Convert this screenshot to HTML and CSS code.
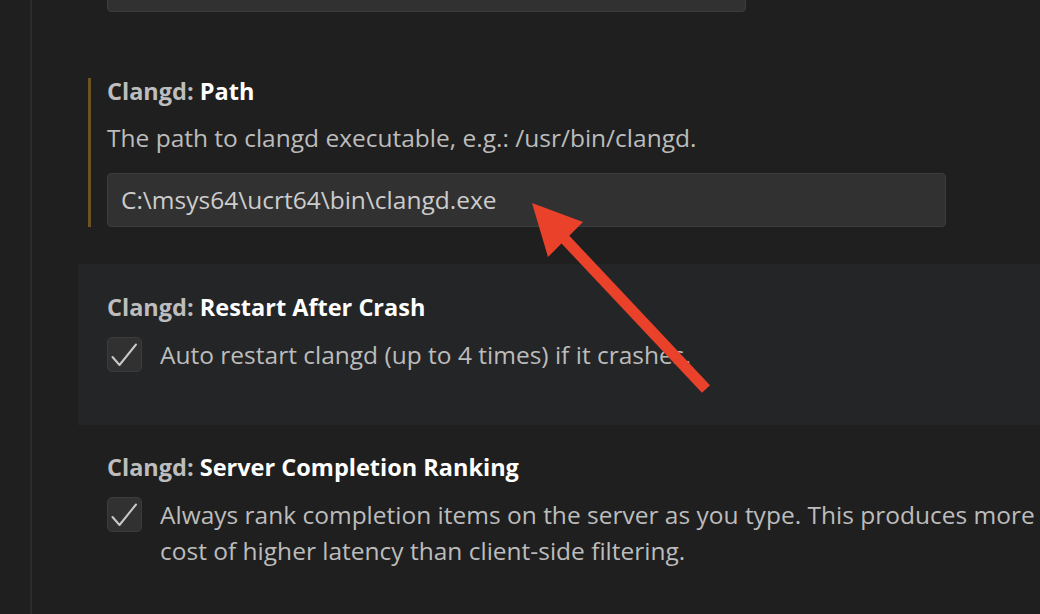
FILE: index.html
```html
<!DOCTYPE html>
<html>
<head>
<meta charset="utf-8">
<link rel="stylesheet" href="styles.css">
</head>
<body>
<div class="page">
  <div class="gutter"></div>
  <div class="content">
    <div class="item item-prev">
      <div class="input input-short">[ --header-insertion=never ]</div>
    </div>

    <div class="item item-path">
      <div class="modified">
        <div class="title"><span class="cat">Clangd: </span><span class="key">Path</span></div>
        <div class="desc">The path to clangd executable, e.g.: /usr/bin/clangd.</div>
        <div class="input">C:\msys64\ucrt64\bin\clangd.exe</div>
      </div>
    </div>

    <div class="item item-hover">
      <div class="title"><span class="cat">Clangd: </span><span class="key">Restart After Crash</span></div>
      <div class="bool-row">
        <div class="checkbox">
          <svg viewBox="0 0 35 35" width="35" height="35"><path d="M5.5 20 L12.5 28 L29 7.5" fill="none" stroke="#c8c8c8" stroke-width="2" stroke-linecap="round" stroke-linejoin="round"/></svg>
        </div>
        <div class="desc bool-desc">Auto restart clangd (up to 4 times) if it crashes.</div>
      </div>
    </div>

    <div class="item item-last">
      <div class="title"><span class="cat">Clangd: </span><span class="key">Server Completion Ranking</span></div>
      <div class="bool-row">
        <div class="checkbox">
          <svg viewBox="0 0 35 35" width="35" height="35"><path d="M5.5 20 L12.5 28 L29 7.5" fill="none" stroke="#c8c8c8" stroke-width="2" stroke-linecap="round" stroke-linejoin="round"/></svg>
        </div>
        <div class="desc bool-desc bool-desc-wide">Always rank completion items on the server as you type. This produces more accurate results at the cost of higher latency than client-side filtering.</div>
      </div>
    </div>
  </div>
</div>

<svg class="annotation" width="1040" height="614" viewBox="0 0 1040 614">
  <line x1="562" y1="236" x2="706" y2="389" stroke="#e9412a" stroke-width="11"/>
  <polygon points="532,203 583,222 548,257" fill="#e9412a"/>
</svg>
</body>
</html>
```

FILE: styles.css
```css
html, body {
  margin: 0;
  padding: 0;
  background: #1f1f1f;
  width: 1040px;
  height: 614px;
  overflow: hidden;
  font-family: "Open Sans", "Noto Sans", "Liberation Sans", sans-serif;
}

.page {
  display: flex;
  height: 614px;
}

.gutter {
  width: 30px;
  flex: none;
  border-right: 2px solid #2b2b2b;
}

.content {
  flex: 1;
  margin-left: 46px;
  min-width: 0;
}

.item {
  padding: 30px 0 36px 29px;
}

.item-prev {
  margin-top: -89px;
}

.item-path {
  padding-bottom: 37px;
}

.item-hover {
  background: #242527;
  padding-bottom: 52px;
}

.item-last {
  padding-top: 29px;
}

.modified {
  margin-left: -19px;
  padding-left: 16px;
  border-left: 3px solid #6b5424;
}

.title {
  font-size: 23.5px;
  line-height: 26px;
  font-weight: 700;
  white-space: nowrap;
}

.cat {
  color: #bdbdbd;
}

.key {
  color: #ffffff;
}

.desc {
  font-size: 24.5px;
  line-height: 36px;
  color: #bcbcbc;
  margin-top: 16px;
  white-space: nowrap;
}

.input {
  margin-top: 17px;
  width: 839px;
  height: 54px;
  box-sizing: border-box;
  background: #313131;
  border: 1.5px solid #3c3c3c;
  border-radius: 4px;
  padding: 0 13px;
  font-size: 24.5px;
  line-height: 51px;
  color: #cccccc;
  white-space: nowrap;
  overflow: hidden;
}

.input-short {
  width: 639px;
}

.bool-row {
  display: flex;
  align-items: flex-start;
  gap: 18px;
  margin-top: 17px;
}

.checkbox {
  flex: none;
  width: 35px;
  height: 35px;
  box-sizing: border-box;
  background: #313131;
  border: 1px solid #3c3c3c;
  border-radius: 5px;
  position: relative;
}

.checkbox svg {
  position: absolute;
  left: -1px;
  top: -1px;
}

.bool-desc {
  margin-top: 0;
  line-height: 36px;
  white-space: normal;
  flex: none;
  width: 900px;
}

.bool-desc-wide {
  width: 1160px;
}

.annotation {
  position: absolute;
  left: 0;
  top: 0;
  pointer-events: none;
}
```
